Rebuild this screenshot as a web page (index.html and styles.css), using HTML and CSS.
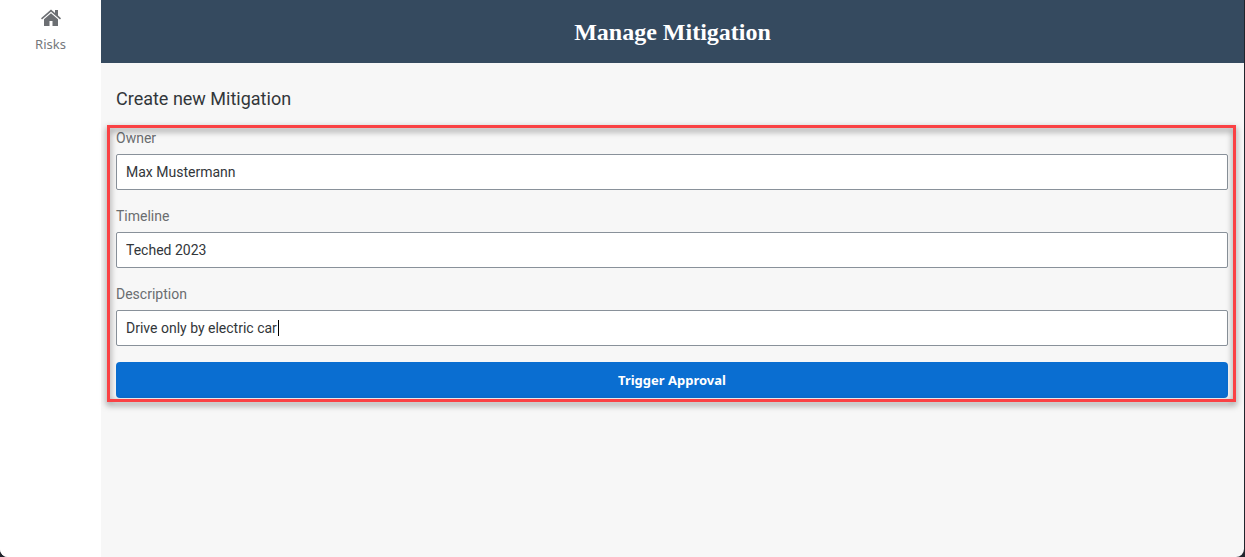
FILE: index.html
```html
<!DOCTYPE html>
<html lang="en">
<head>
<meta charset="utf-8">
<meta name="viewport" content="width=device-width, initial-scale=1">
<title>Manage Mitigation</title>
<link rel="stylesheet" href="styles.css">
</head>
<body>
<div class="app">
  <nav class="sidebar">
    <a class="nav-item" href="#risks">
      <svg class="nav-icon" viewBox="0 0 20 18" aria-hidden="true">
        <path d="M10 0.5 L14 4 V1 H17 V6.6 L20 9.3 L19 10.6 L10 2.8 L1 10.6 L0 9.3 Z"/>
        <path d="M10 4.2 L17 10.3 V17 H11.5 V12 H8.5 V17 H3 V10.3 Z"/>
      </svg>
      <span>Risks</span>
    </a>
  </nav>
  <div class="page">
    <header class="header"><h1 class="title">Manage Mitigation</h1></header>
    <main class="content">
      <h2 class="subtitle">Create new Mitigation</h2>
      <form class="form">
        <div class="field">
          <label class="label" for="owner">Owner</label>
          <input class="input" id="owner" type="text" value="Max Mustermann">
        </div>
        <div class="field">
          <label class="label" for="timeline">Timeline</label>
          <input class="input" id="timeline" type="text" value="Teched 2023">
        </div>
        <div class="field">
          <label class="label" for="description">Description</label>
          <div class="editing">
            <input class="input" id="description" type="text" value="Drive only by electric car">
            <span class="caret"></span>
          </div>
        </div>
        <button class="submit" type="button">Trigger Approval</button>
      </form>
    </main>
  </div>
</div>
</body>
</html>
```

FILE: styles.css
```css
* {
  box-sizing: border-box;
}

body {
  margin: 0;
  background: #20242c;
  font-family: Roboto, "Noto Sans", sans-serif;
  font-size: 14px;
  color: #32363a;
}

.app {
  display: flex;
  min-height: 100vh;
  margin-right: 1px;
  background: #f7f7f7;
  border-radius: 0 0 8px 8px;
  overflow: hidden;
}

.sidebar {
  flex: 0 0 101px;
  padding-top: 9px;
  background: #fff;
}

.nav-item {
  display: flex;
  flex-direction: column;
  align-items: center;
  gap: 8px;
  font-family: "Noto Sans", "Open Sans", sans-serif;
  font-size: 13px;
  line-height: 18px;
  color: #75787b;
  text-decoration: none;
}

.nav-icon {
  width: 20px;
  height: 18px;
  fill: #6c6f73;
}

.page {
  flex: 1;
  min-width: 0;
}

.header {
  display: flex;
  align-items: center;
  justify-content: center;
  height: 63px;
  padding-top: 2px;
  background: #354a5f;
}

.title {
  margin: 0;
  font-family: "Liberation Serif", "Times New Roman", serif;
  font-size: 24px;
  font-weight: 700;
  color: #fff;
}

.content {
  padding: 24px 8px 24px 6px;
}

.subtitle {
  margin: 0 9px;
  font-size: 18px;
  font-weight: 400;
  line-height: 24px;
}

.form {
  position: relative;
  display: flex;
  flex-direction: column;
  gap: 16px;
  margin-top: 14px;
  padding: 3px 8px 4px 9px;
}

.form::after {
  content: "";
  position: absolute;
  inset: 0;
  border: 3px solid #fa4144;
  filter: drop-shadow(0 3px 3px rgba(0, 0, 0, 0.5));
  pointer-events: none;
}

.field {
  display: flex;
  flex-direction: column;
  gap: 6px;
}

.label {
  line-height: 20px;
  color: #6a6d70;
}

.input {
  display: block;
  width: 100%;
  height: 36px;
  padding: 0 9px;
  border: 1px solid #89919a;
  border-radius: 2px;
  background: #fff;
  font: inherit;
  color: inherit;
}

.editing {
  position: relative;
}

.caret {
  position: absolute;
  top: 10px;
  left: 162px;
  width: 1px;
  height: 16px;
  background: #000;
}

.submit {
  height: 36px;
  border: 0;
  border-radius: 4px;
  background: #0a6ed1;
  font-family: "Noto Sans", "Open Sans", sans-serif;
  font-size: 13px;
  font-weight: 700;
  color: #fff;
}
```
